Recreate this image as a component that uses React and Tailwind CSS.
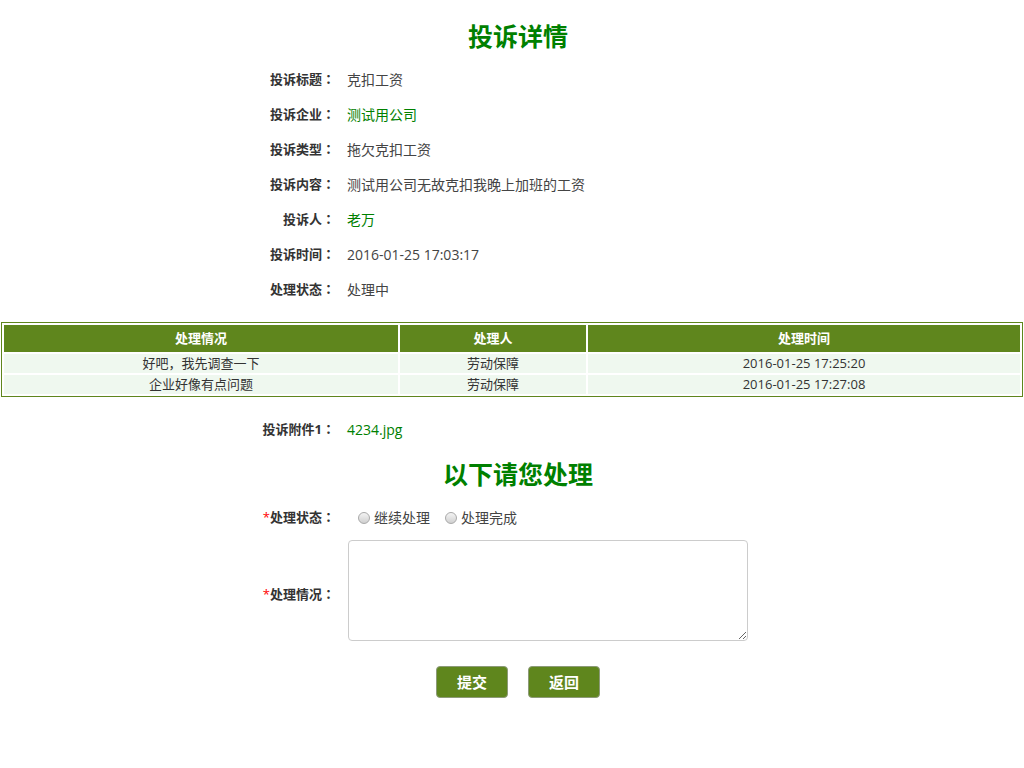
import React from "react";

const rows = [
  { label: "投诉标题", value: "克扣工资" },
  { label: "投诉企业", value: "测试用公司", green: true },
  { label: "投诉类型", value: "拖欠克扣工资" },
  { label: "投诉内容", value: "测试用公司无故克扣我晚上加班的工资" },
  { label: "投诉人", value: "老万", green: true },
  { label: "投诉时间", value: "2016-01-25 17:03:17" },
  { label: "处理状态", value: "处理中" },
];

const records = [
  { note: "好吧，我先调查一下", who: "劳动保障", time: "2016-01-25 17:25:20" },
  { note: "企业好像有点问题", who: "劳动保障", time: "2016-01-25 17:27:08" },
];

const Colon = () => <span className="font-['Noto_Sans_CJK_TC',sans-serif]">：</span>;

const Radio = ({ text }) => (
  <label className="flex items-center">
    <span className="w-[12px] h-[12px] rounded-full border border-[#a9a9a9] bg-gradient-to-b from-[#f4f4f4] to-[#d0d0d0]" />
    <span className="ml-[4px] text-[14px] text-[#444]">{text}</span>
  </label>
);

const App = () => {
  return (
    <div className="min-h-[768px] bg-white pt-[18px] font-['Open_Sans','Noto_Sans_CJK_SC',sans-serif] text-[#333]">
      <h1 className="pl-[12px] text-center text-[25px] font-bold leading-[36px] text-[#008000]">投诉详情</h1>

      <div className="mt-[8px]">
        {rows.map((r) => (
          <div key={r.label} className="flex h-[35px] items-center">
            <div className="ml-[232px] w-[103px] text-right text-[13px] font-bold text-[#333]">{r.label}<Colon /></div>
            <div className={"ml-[12px] text-[14px] " + (r.green ? "text-[#008000]" : "text-[#444]")}>{r.value}</div>
          </div>
        ))}
      </div>

      <table className="mt-[15px] ml-[1px] w-[1022px] border border-[#5f861d] border-separate border-spacing-[2px] text-[13px]">
        <thead>
          <tr className="bg-[#5f861d] text-white">
            <th className="h-[27px] w-[394px] p-0 font-bold">处理情况</th>
            <th className="h-[27px] w-[186px] p-0 font-bold">处理人</th>
            <th className="h-[27px] p-0 font-bold">处理时间</th>
          </tr>
        </thead>
        <tbody>
          {records.map((r) => (
            <tr key={r.time} className="bg-[#eff8ef] text-[#333]">
              <td className="h-[19px] p-0 text-center leading-[19px]">{r.note}</td>
              <td className="h-[19px] p-0 text-center leading-[19px]">{r.who}</td>
              <td className="h-[19px] p-0 text-center leading-[19px]">{r.time}</td>
            </tr>
          ))}
        </tbody>
      </table>

      <div className="mt-[15px] flex h-[35px] items-center">
        <div className="ml-[232px] w-[103px] text-right text-[13px] font-bold">投诉附件1<Colon /></div>
        <div className="ml-[12px] text-[14px] text-[#008000]">4234.jpg</div>
      </div>

      <h2 className="mt-[9px] pl-[12px] text-center text-[25px] font-bold leading-[36px] text-[#008000]">以下请您处理</h2>

      <div className="mt-[8px] flex h-[35px] items-center">
        <div className="ml-[232px] w-[103px] text-right text-[13px] font-bold">
          <span className="text-[#ff0000] font-normal">*</span>处理状态<Colon />
        </div>
        <div className="ml-[23px] flex items-center gap-[15px]">
          <Radio text="继续处理" />
          <Radio text="处理完成" />
        </div>
      </div>

      <div className="mt-[5px] flex items-center">
        <div className="ml-[232px] w-[103px] pt-[8px] text-right text-[13px] font-bold">
          <span className="text-[#ff0000] font-normal">*</span>处理情况<Colon />
        </div>
        <textarea className="ml-[13px] h-[101px] w-[400px] rounded-[4px] border border-[#cccccc] bg-white outline-none" />
      </div>

      <div className="mt-[25px] flex justify-center gap-[20px] pl-[12px]">
        <button className="h-[32px] w-[72px] rounded-[4px] border border-[#8c9a78] bg-[#5f861d] text-[15px] font-bold text-white">提交</button>
        <button className="h-[32px] w-[72px] rounded-[4px] border border-[#8c9a78] bg-[#5f861d] text-[15px] font-bold text-white">返回</button>
      </div>
    </div>
  );
};

export default App;
